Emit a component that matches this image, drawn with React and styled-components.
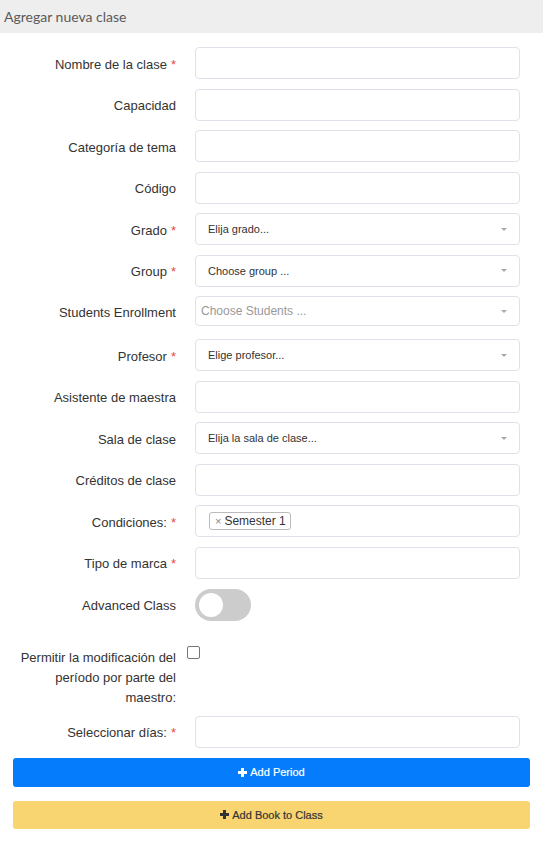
import React from 'react';
import styled, { createGlobalStyle } from 'styled-components';

const Global = createGlobalStyle`
  body {
    margin: 0;
    background: #fff;
    font-family: "Liberation Sans", Arial, sans-serif;
  }
`;

const Header = styled.div`
  height: 33px;
  background: #eeeeee;
  display: flex;
  align-items: center;
  padding-left: 4px;
  font-family: Lato, "Liberation Sans", sans-serif;
  font-size: 14px;
  color: #5a5a5a;
`;

const Body = styled.div`
  padding: 14px 13px 20px;
`;

const Row = styled.div`
  display: flex;
  align-items: ${p => (p.top ? 'flex-start' : 'center')};
  margin-bottom: ${p => p.mb ?? 9.5}px;
`;

const Label = styled.label`
  width: 163px;
  margin-right: 19px;
  text-align: right;
  font-size: 13px;
  line-height: ${p => (p.multi ? '20px' : '16px')};
  color: #333;
  flex-shrink: 0;
  padding-top: ${p => (p.multi ? 2 : 3)}px;
`;

const Req = styled.span`
  color: #e74c3c;
  margin-left: 4px;
`;

const Input = styled.div`
  width: 325px;
  height: ${p => p.h ?? 32}px;
  box-sizing: border-box;
  border: 1px solid #dfe2ea;
  border-radius: 4px;
  background: #fff;
`;

const Select = styled(Input)`
  display: flex;
  align-items: center;
  justify-content: space-between;
  padding: 0 12px 0 ${p => (p.placeholder ? 5 : 12)}px;
  font-size: ${p => (p.placeholder ? 12 : 11)}px;
  color: ${p => (p.placeholder ? '#999' : '#333')};
`;

const Caret = styled.span`
  width: 0;
  height: 0;
  border-left: 3.5px solid transparent;
  border-right: 3.5px solid transparent;
  border-top: 3.5px solid #aaa;
`;

const TagBox = styled(Input)`
  display: flex;
  align-items: center;
  padding-left: 13px;
`;

const Tag = styled.span`
  display: inline-flex;
  align-items: center;
  height: 18px;
  box-sizing: border-box;
  padding: 0 4px 0 5px;
  border: 1px solid #bbb;
  border-radius: 3px;
  font-size: 12px;
  color: #333;
  background: #fff;
  span {
    color: #888;
    margin-right: 3px;
    font-size: 11px;
  }
`;

const Toggle = styled.div`
  width: 56px;
  height: 32px;
  border-radius: 16px;
  background: #cccccc;
  display: flex;
  align-items: center;
  padding-left: 4px;
  box-sizing: border-box;
  &::before {
    content: '';
    width: 24px;
    height: 24px;
    border-radius: 50%;
    background: #fff;
  }
`;

const Check = styled.span`
  width: 11px;
  height: 11px;
  margin-left: -8px;
  margin-top: 0;
  border: 1px solid #777;
  border-radius: 2px;
  background: #fff;
`;

const Button = styled.div`
  height: ${p => p.h}px;
  border-radius: 3px;
  display: flex;
  align-items: center;
  justify-content: center;
  gap: 3px;
  font-size: 11px;
  -webkit-text-stroke: 0.2px ${p => p.fg};
  background: ${p => p.bg};
  color: ${p => p.fg};
  margin-bottom: ${p => p.mb ?? 0}px;
`;

const Plus = ({ color }) => (
  <svg width="9" height="9" viewBox="0 0 9 9">
    <path d="M3 0h3v3h3v3H6v3H3V6H0V3h3z" fill={color} />
  </svg>
);

const Field = ({ label, req, children, mb }) => (
  <Row mb={mb}>
    <Label>
      {label}
      {req && <Req>*</Req>}
    </Label>
    {children}
  </Row>
);

export default function App() {
  return (
    <>
      <Global />
      <Header>Agregar nueva clase</Header>
      <Body>
        <Field label="Nombre de la clase" req><Input /></Field>
        <Field label="Capacidad"><Input /></Field>
        <Field label="Categoría de tema"><Input /></Field>
        <Field label="Código"><Input /></Field>
        <Field label="Grado" req>
          <Select>Elija grado...<Caret /></Select>
        </Field>
        <Field label="Group" req>
          <Select>Choose group ...<Caret /></Select>
        </Field>
        <Field label="Students Enrollment" mb={13}>
          <Select h={30} placeholder="1">Choose Students ...<Caret /></Select>
        </Field>
        <Field label="Profesor" req>
          <Select>Elige profesor...<Caret /></Select>
        </Field>
        <Field label="Asistente de maestra"><Input /></Field>
        <Field label="Sala de clase">
          <Select>Elija la sala de clase...<Caret /></Select>
        </Field>
        <Field label="Créditos de clase"><Input /></Field>
        <Field label="Condiciones:" req>
          <TagBox>
            <Tag><span>×</span>Semester 1</Tag>
          </TagBox>
        </Field>
        <Field label="Tipo de marca" req mb={10}><Input /></Field>
        <Field label="Advanced Class" mb={25}><Toggle /></Field>
        <Row top mb={8}>
          <Label multi>Permitir la modificación del período por parte del maestro:</Label>
          <Check />
        </Row>
        <Field label="Seleccionar días:" req mb={10}><Input /></Field>
        <Button h={29} bg="#047cfb" fg="#fff" mb={14}>
          <Plus color="#fff" />Add Period
        </Button>
        <Button h={28} bg="#f8d571" fg="#333">
          <Plus color="#333" />Add Book to Class
        </Button>
      </Body>
    </>
  );
}
